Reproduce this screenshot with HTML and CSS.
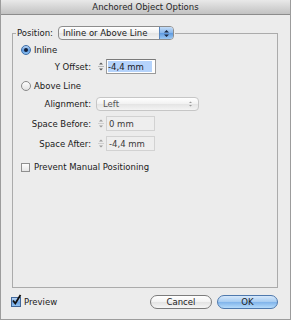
FILE: index.html
```html
<!DOCTYPE html>
<html lang="en">

<head>
    <meta charset="UTF-8">
    <meta name="viewport" content="width=device-width, initial-scale=1.0">
    <title>Anchored Object Options</title>
    <link rel="stylesheet" href="styles.css">
</head>

<body>

    <div class="window">
        <div class="titlebar">Anchored Object Options</div>

        <fieldset class="group">
            <legend class="legend">
                <span class="legend-label">Position:</span>
                <span class="popup">
                    <span class="popup-text">Inline or Above Line</span>
                    <span class="popup-cap">
                        <svg width="7" height="9" viewBox="0 0 7 9"><path d="M1 3.5 L3.5 1 L6 3.5Z M1 5.5 L3.5 8 L6 5.5Z" fill="#1b2a44"/></svg>
                    </span>
                </span>
            </legend>

            <div class="group-body">
                <div class="row row-inline">
                    <span class="radio on"></span>
                    <span>Inline</span>
                </div>

                <div class="row row-offset">
                    <span class="label">Y Offset:</span>
                    <span class="stepper">
                        <svg width="10" height="15" viewBox="0 0 10 15"><path d="M3 5.5 L5 3.5 L7 5.5Z M3 9.5 L5 11.5 L7 9.5Z" fill="#555"/><path d="M2 7.5 H8" stroke="#b8b8b8" stroke-width="1"/></svg>
                    </span>
                    <span class="field"><span class="sel">-4,4 mm</span></span>
                </div>

                <div class="row row-above">
                    <span class="radio"></span>
                    <span>Above Line</span>
                </div>

                <div class="row row-align">
                    <span class="label">Alignment:</span>
                    <span class="popup off">
                        <span class="popup-text">Left</span>
                        <svg width="5" height="8" viewBox="0 0 5 8"><path d="M1 3 L2.5 1.5 L4 3Z M1 5 L2.5 6.5 L4 5Z" fill="#999"/></svg>
                    </span>
                </div>

                <div class="row row-before">
                    <span class="label">Space Before:</span>
                    <span class="stepper off">
                        <svg width="10" height="15" viewBox="0 0 10 15"><path d="M3 5.5 L5 3.5 L7 5.5Z M3 9.5 L5 11.5 L7 9.5Z" fill="#9a9a9a"/><path d="M2 7.5 H8" stroke="#cfcfcf" stroke-width="1"/></svg>
                    </span>
                    <span class="field off">0 mm</span>
                </div>

                <div class="row row-after">
                    <span class="label">Space After:</span>
                    <span class="stepper off">
                        <svg width="10" height="15" viewBox="0 0 10 15"><path d="M3 5.5 L5 3.5 L7 5.5Z M3 9.5 L5 11.5 L7 9.5Z" fill="#9a9a9a"/><path d="M2 7.5 H8" stroke="#cfcfcf" stroke-width="1"/></svg>
                    </span>
                    <span class="field off">-4,4 mm</span>
                </div>

                <div class="row row-prevent">
                    <span class="check"></span>
                    <span>Prevent Manual Positioning</span>
                </div>
            </div>
        </fieldset>

        <div class="footer">
            <div class="preview">
                <span class="check on">
                    <svg width="11" height="12" viewBox="0 0 11 12"><path d="M2 6.5 L4.3 9.5 L9.5 1" fill="none" stroke="#111" stroke-width="1.8"/></svg>
                </span>
                <span>Preview</span>
            </div>
            <div class="buttons">
                <span class="btn">Cancel</span>
                <span class="btn default">OK</span>
            </div>
        </div>
    </div>

</body>

</html>
```

FILE: styles.css
```css
body {
    margin: 0;
    padding: 0;
    font-family: "DejaVu Sans", "Liberation Sans", sans-serif;
    font-size: 8.5px;
    color: #1a1a1a;
}

.window {
    width: 291px;
    height: 320px;
    box-sizing: border-box;
    background: #ececec;
    border: 1px solid #9c9c9c;
    border-top: 0;
    display: flex;
    flex-direction: column;
}

.titlebar {
    height: 14px;
    line-height: 14px;
    text-align: center;
    color: #262626;
    background: linear-gradient(#e9e9e9, #c2c2c2);
    border-bottom: 1px solid #8c8c8c;
}

/* group box */
.group {
    flex: 1;
    min-width: 0;
    margin: 11px 12px 0 11px;
    padding: 0;
    border: 1px solid #ababab;
}

.legend {
    margin-left: 3px;
    padding: 0 1px;
    height: 14px;
    display: flex;
    align-items: center;
}

.legend-label {
    margin-right: 5px;
}

.popup {
    display: flex;
    align-items: center;
    box-sizing: border-box;
    height: 14px;
    border: 1px solid #8d8d8d;
    border-radius: 4px;
    background: linear-gradient(#ffffff, #f1f1f1 50%, #e4e4e4 51%, #f4f4f4);
    overflow: hidden;
}

.legend .popup {
    width: 116px;
}

.popup-text {
    flex: 1;
    padding-left: 4px;
}

.popup-cap {
    width: 13px;
    height: 100%;
    display: flex;
    align-items: center;
    justify-content: center;
    border-left: 1px solid #5b88bf;
    background: linear-gradient(#c4dcf7, #86b5ea 50%, #5e9ae0 51%, #9cc8f2);
}

.popup.off {
    width: 103px;
    border-color: #c6c6c6;
    color: #555;
    padding-right: 5px;
}

.popup.off .popup-text {
    padding-left: 6px;
}

.group-body {
    padding: 4px 0 0 8px;
}

.row {
    display: flex;
    align-items: center;
}

.row-inline {
    height: 12px;
}

.row-offset {
    height: 15px;
    margin-top: 3px;
}

.row-above {
    height: 12px;
    margin-top: 6px;
}

.row-align {
    height: 14px;
    margin-top: 5px;
}

.row-before {
    height: 15px;
    margin-top: 5px;
}

.row-after {
    height: 15px;
    margin-top: 5px;
}

.row-prevent {
    height: 12px;
    margin-top: 10px;
}

.label {
    width: 70px;
    text-align: right;
    margin-right: 5px;
}

.radio {
    width: 10px;
    height: 10px;
    box-sizing: border-box;
    border-radius: 50%;
    border: 1px solid #8a8a8a;
    background: linear-gradient(#fdfdfd, #e2e2e2);
    margin-right: 3px;
    display: flex;
    align-items: center;
    justify-content: center;
}

.radio.on {
    border-color: #3d6ea8;
    background: linear-gradient(#b8d4f4, #5f9be0 55%, #8cc0f0);
}

.radio.on::after {
    content: "";
    width: 4px;
    height: 4px;
    border-radius: 50%;
    background: #14213a;
}

.stepper {
    width: 10px;
    height: 15px;
    display: flex;
}

.field {
    width: 50px;
    height: 15px;
    box-sizing: border-box;
    border: 1px solid #9a9a9a;
    border-top-color: #7a7a7a;
    background: #fff;
    padding: 1px;
    display: flex;
    align-items: center;
}

.sel {
    height: 100%;
    display: flex;
    align-items: center;
    padding-right: 8px;
    background: #b5d3fb;
}

.field.off {
    width: 49px;
    border-color: #d2d2d2;
    background: #eeeeee;
    padding-left: 2px;
    color: #3a3a3a;
}

.check {
    width: 9px;
    height: 9px;
    box-sizing: border-box;
    border: 1px solid #8f8f8f;
    background: linear-gradient(#fdfdfd, #e6e6e6);
    margin-right: 4px;
    display: flex;
}

.check.on {
    border-color: #41679a;
    background: linear-gradient(#b9d5f4, #6ea4e4 55%, #92c2ef);
    position: relative;
}

.check.on svg {
    position: absolute;
    left: -1px;
    top: -4px;
}

/* bottom bar */
.footer {
    height: 31px;
    box-sizing: border-box;
    padding: 7px 12px 0 10px;
    display: flex;
    align-items: flex-start;
    justify-content: space-between;
}

.preview {
    height: 14px;
    display: flex;
    align-items: center;
}

.preview .check {
    width: 10px;
    height: 10px;
    margin-right: 3px;
}

.buttons {
    display: flex;
    gap: 5px;
}

.btn {
    width: 62px;
    height: 14px;
    box-sizing: border-box;
    border: 1px solid #7c7c7c;
    border-radius: 7px;
    background: linear-gradient(#ffffff, #f2f2f2 50%, #e3e3e3 51%, #f6f6f6);
    display: flex;
    align-items: center;
    justify-content: center;
}

.btn.default {
    width: 61px;
    border-color: #4f79ad;
    background: linear-gradient(#d6e8fb, #a5cbf1 50%, #7fb3ea 51%, #b5dbfb);
}
```
